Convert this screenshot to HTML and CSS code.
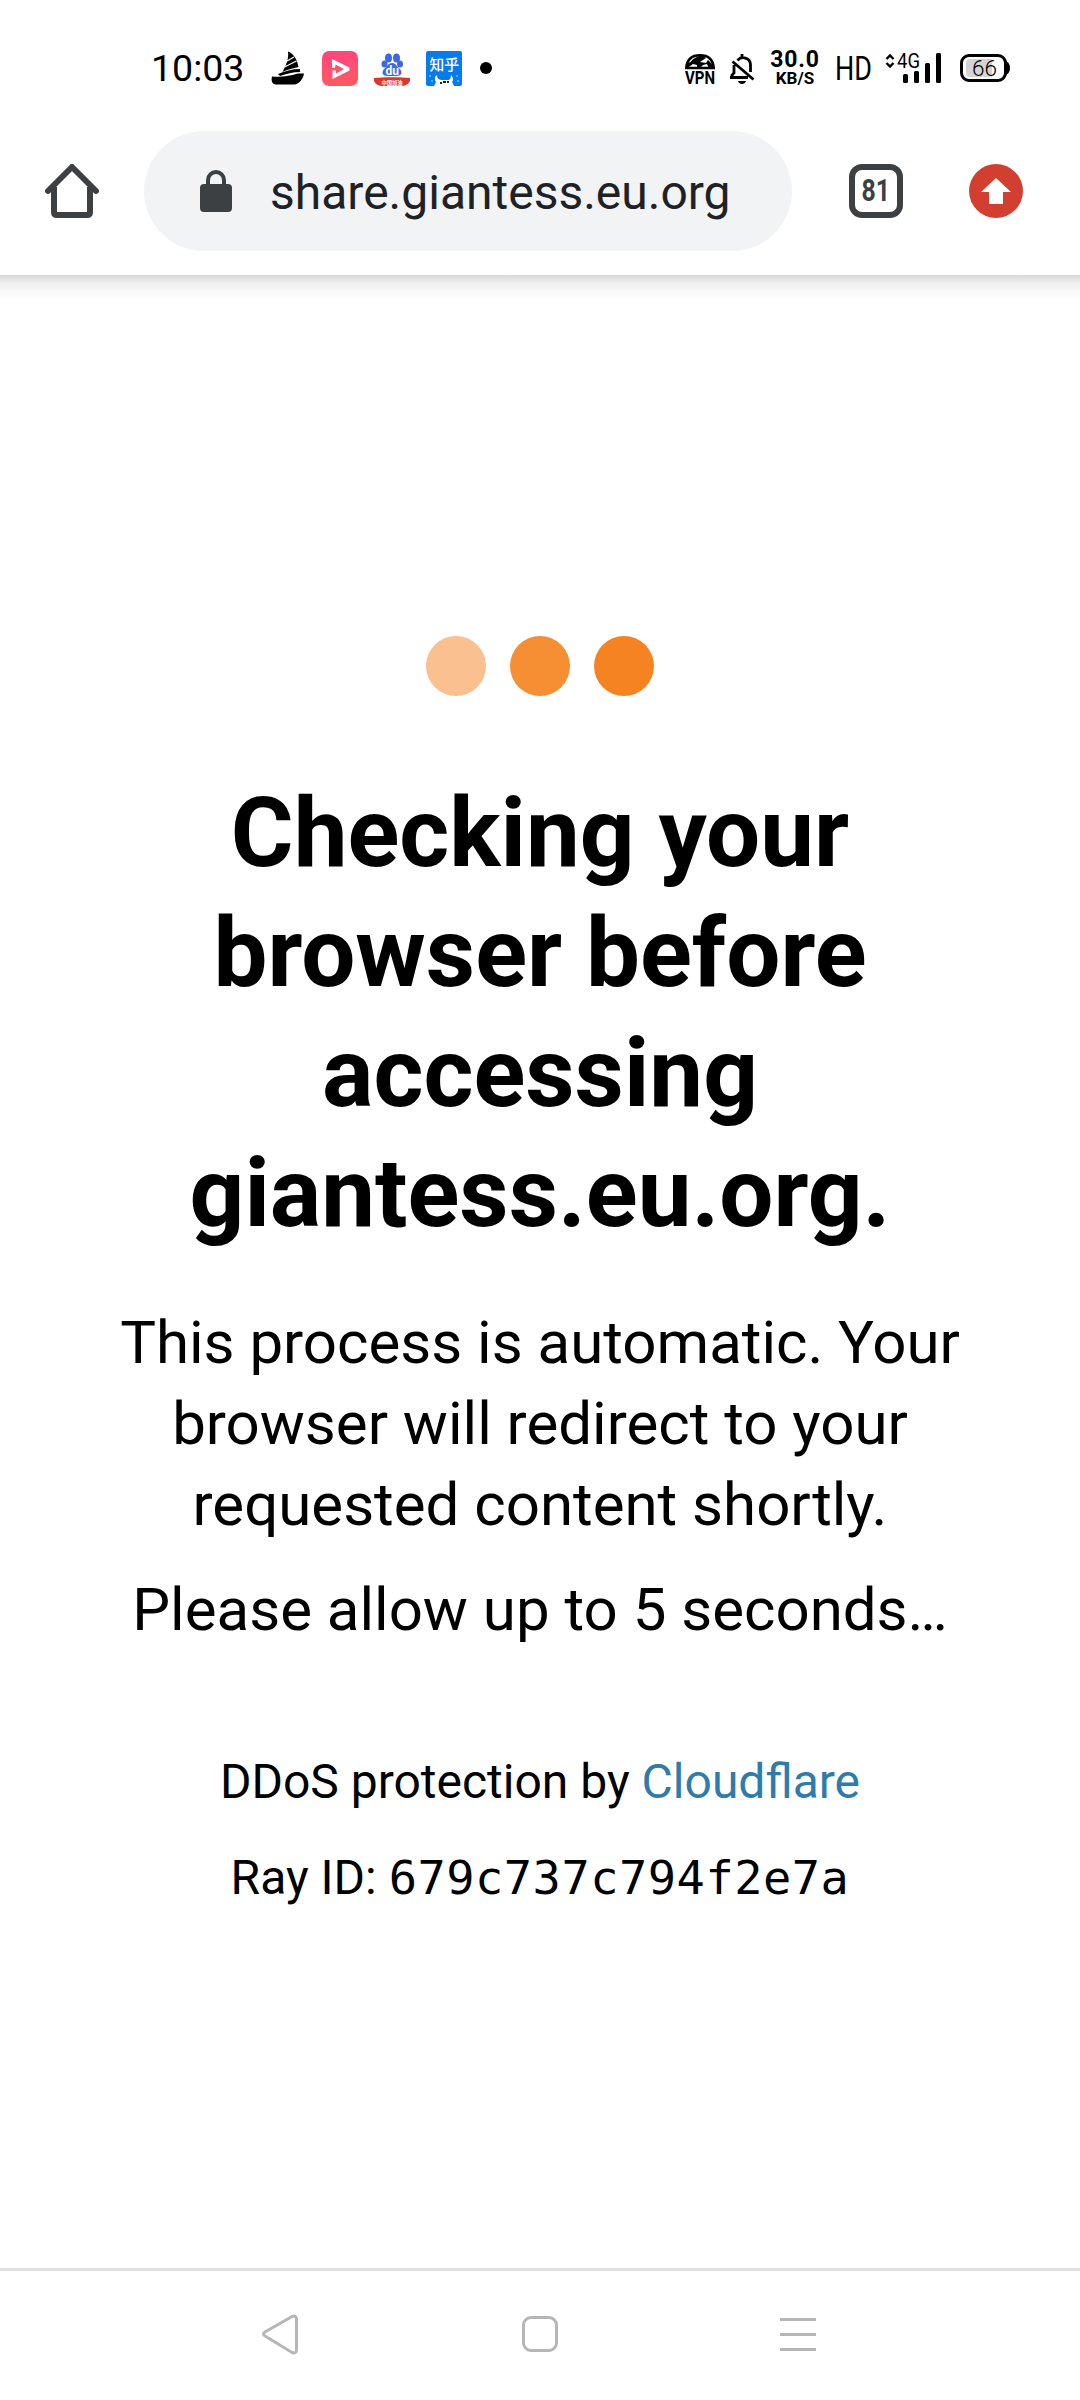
FILE: index.html
```html
<!DOCTYPE html>
<html lang="en">
<head>
<meta charset="utf-8">
<title>Checking your browser</title>
<link rel="stylesheet" href="styles.css">
</head>
<body>
<header class="status">
  <span class="clock">10:03</span>
  <div class="notifications">
    <svg width="36" height="36" viewBox="0 0 36 36"><path d="M18 1.500C24 4 27 9 28.500 17c-5 1-12 3-16 5C16 15 19 9 18 1.500z"/><path d="M8 24c7-3 14-5 22-5v3c-7 0-14 2-20 4z"/><path d="M17 11l7-4M14.500 17l12-6" stroke="#fff" stroke-width="1.200"/><path d="M2 26.500c8 1 20-1 26-3h6c-1 6-5 10-9 11H6c-4 0-5-4-4-8z"/></svg>
    <svg width="36" height="36" viewBox="0 0 36 36"><defs><linearGradient id="pink" x2="0" y2="1"><stop stop-color="#ff467c"/><stop offset="1" stop-color="#ff5a62"/></linearGradient></defs><rect y="1" width="36" height="35" rx="7" fill="url(#pink)"/><path d="M10 9L27.500 17.500v3L10.500 29v-8.500h3.500v3l8-4.500-8.500-4.500-.5 3.500h-3z" fill="#fff"/></svg>
    <svg width="36" height="36" viewBox="0 0 36 36"><g fill="#3b6ade"><ellipse cx="14.500" cy="8" rx="3.500" ry="4.500"/><ellipse cx="22.500" cy="8" rx="3.500" ry="4.500"/><ellipse cx="10.500" cy="14" rx="3" ry="3.500"/><ellipse cx="26" cy="14" rx="3" ry="3.500"/><path d="M18 13c4 0 5 4 8 6 3 4 1 7-3 7H13c-4 0-6-3-3-7 3-2 4-6 8-6z"/></g><text class="du" x="18.300" y="24.500">du</text><path d="M0 28c8-1 28-1 36 0v3c-2 4-6 5-9 5H9c-4 0-8-2-9-5z" fill="#df3430"/><text class="ribbon" x="7.500" y="34.500" textLength="21" lengthAdjust="spacingAndGlyphs">中国加油</text></svg>
    <svg width="36" height="36" viewBox="0 0 36 36"><rect y="1" width="36" height="35" rx="2" fill="#087bec"/><text class="zhihu" x="3.500" y="19.500" textLength="29.500" lengthAdjust="spacingAndGlyphs">知乎</text><path d="M8 36l2-4c-2-3-1-6 1-7 0 3 1 4 4 5h7c2 0 3-2 3-5 2 2 3 5 1 7l2 4z" fill="#fff"/><path d="M14 32h2v2h-2zM21 31h2v2h-2zM17 31h3v2h-3z" fill="#222"/><path d="M4 25v2M6 30v2M31 25v2M32 30v2" stroke="#73bcff" stroke-width="1.500"/></svg>
    <svg width="12" height="36" viewBox="0 0 12 36"><circle cx="6" cy="18" r="6"/></svg>
  </div>
  <div class="signals">
    <svg width="30" height="36" viewBox="0 0 30 36"><path d="M1.300 18C2 9 7 5.300 15 5.300S28 9 28.700 18z" fill="none" stroke="#000" stroke-width="2.600"/><path d="M1 19l2-6c3 0 4-4 7-5l6-3 5 3-6 4 6 1 2-3 5 5 1 4h-5l-2-5-4 1-3 3h-3v-3l-4-1z"/><text class="vpn" y="34" textLength="30" lengthAdjust="spacingAndGlyphs">VPN</text></svg>
    <svg class="bell" width="26" height="36" viewBox="0 0 26 36"><path d="M3.500 11.500l21 18M1 27.500h18M3 28v-3l2-2v-8M8.500 10.500c4-5 13-3 13 4.500v7M13 4v4" fill="none" stroke="#000" stroke-width="2.800"/><path d="M9 31h8c-1 4-7 4-8 0z"/></svg>
    <div class="speed"><span class="rate">30.0</span><span class="unit">KB/S</span></div>
    <svg class="hd" width="36" height="36" viewBox="0 0 36 36"><text class="hd-text" y="30" textLength="37" lengthAdjust="spacingAndGlyphs">HD</text></svg>
    <svg class="cell" width="57" height="36" viewBox="0 0 57 36"><path d="M1.500 9L5 5.500 8.500 9M1.500 13L5 16.500 8.500 13" fill="none" stroke="#000" stroke-width="2.400"/><text class="net" x="12" y="17.500" textLength="23" lengthAdjust="spacingAndGlyphs">4G</text><g><rect x="18" y="24" width="5" height="9" rx="1.500"/><rect x="29" y="21" width="5" height="12" rx="1.500"/><rect x="40" y="13" width="5" height="20" rx="1.500"/><rect x="51" y="3" width="5" height="30" rx="1.500"/></g></svg>
    <svg class="battery" width="50" height="36" viewBox="0 0 50 36"><path d="M10 9h22v18H10q-4 0-4-4V13q0-4 4-4z" fill="#d4d4d4"/><rect x="1.500" y="5.500" width="44" height="25" rx="7.500" fill="none" stroke="#000" stroke-width="3"/><path d="M46 11q4 2 4 7t-4 7z"/><text class="charge" x="12" y="26" textLength="25" lengthAdjust="spacingAndGlyphs">66</text></svg>
  </div>
</header>
<nav class="toolbar">
  <svg width="54" height="54" viewBox="0 0 54 54" fill="none" stroke="#3c4043" stroke-width="6" stroke-linejoin="round"><path d="M3 27L27 3l24 24" stroke-linecap="round"/><path d="M9 23v25q0 3 3 3h30q3 0 3-3V23" /></svg>
  <div class="omnibox">
    <svg width="32" height="42" viewBox="0 0 32 42"><rect y="14" width="32" height="28" rx="4" fill="#3c4043"/><path d="M8 15V10a8 8 0 0 1 16 0v5" fill="none" stroke="#3c4043" stroke-width="4"/></svg>
    <span class="url">share.giantess.eu.org</span>
  </div>
  <div class="tabs"><span class="count">81</span></div>
  <svg width="54" height="54" viewBox="0 0 54 54"><circle cx="27" cy="27" r="27" fill="#d23f31"/><path d="M27 14l15 14h-8v12H20V28h-8z" fill="#fff"/></svg>
</nav>
<main class="page">
  <div class="dots"><i class="dot faint"></i><i class="dot mid"></i><i class="dot"></i></div>
  <h1 class="title">Checking your browser before accessing giantess.eu.org.</h1>
  <p class="message">This process is automatic. Your browser will redirect to your requested content shortly.</p>
  <p class="message">Please allow up to 5 seconds…</p>
  <div class="attribution">
    <p>DDoS protection by <a class="link">Cloudflare</a></p>
    <p>Ray ID: <code class="ray">679c737c794f2e7a</code></p>
  </div>
</main>
<footer class="navbar">
  <svg width="38" height="42" viewBox="0 0 38 42"><path d="M31 3.500L4 19q-3 2 0 4l27 16.500q4 1.500 4.500-2V6q-.5-4-4.500-2.500z"/></svg>
  <svg width="36" height="36" viewBox="0 0 36 36"><rect x="1.500" y="1.500" width="33" height="33" rx="7.500"/></svg>
  <svg width="36" height="33" viewBox="0 0 36 33"><path d="M0 1.500h36M0 16.500h36M0 31.500h36"/></svg>
</footer>
</body>
</html>
```

FILE: styles.css
```css
* { box-sizing: border-box; }
body {
  margin: 0;
  width: 1080px;
  height: 2400px;
  display: flex;
  flex-direction: column;
  background: #fff;
  color: #000;
  font-family: Roboto, sans-serif;
}
svg { display: block; flex: none; }
p, h1 { margin: 0; }

/* Status bar */
.status {
  height: 110px;
  padding: 50px 70px 24px 151px;
  display: flex;
  align-items: center;
}
.clock { font-size: 37.5px; line-height: 36px; width: 119px; white-space: nowrap; }
.notifications { display: flex; gap: 16px; }
.notifications svg:last-child { margin-left: 2px; }
.signals { display: flex; margin-left: auto; }
.du { font: 700 12px Roboto, sans-serif; fill: #fff; text-anchor: middle; }
.ribbon { font: 700 6px "Noto Sans CJK SC", sans-serif; fill: #fff; }
.zhihu { font: 500 14.5px "Noto Sans CJK SC", sans-serif; fill: #fff; }
.vpn { font: 700 18.5px Roboto, sans-serif; }
.bell { margin-left: 14px; }
.speed {
  width: 52px;
  margin-left: 14px;
  display: flex;
  flex-direction: column;
  align-items: center;
  font-weight: 700;
}
.rate { font-size: 23px; line-height: 20px; letter-spacing: 0.8px; }
.unit { font-size: 17px; line-height: 17px; }
.hd { margin-left: 14px; overflow: visible; }
.hd-text { font: 400 34px Roboto, sans-serif; }
.cell { margin-left: 14px; }
.net { font: 400 21px Roboto, sans-serif; }
.battery { margin-left: 18px; }
.charge { font: 300 22.5px Roboto, sans-serif; }

/* Browser toolbar */
.toolbar {
  height: 165px;
  padding: 21px 57px 24px 45px;
  display: flex;
  align-items: center;
}
.omnibox {
  width: 648px;
  height: 120px;
  margin-left: 45px;
  padding-left: 56px;
  display: flex;
  align-items: center;
  gap: 38px;
  border-radius: 60px;
  background: #f1f3f5;
}
.url { font-size: 48px; line-height: 56px; padding-top: 4px; color: #202124; }
.tabs {
  width: 54px;
  height: 54px;
  margin: 0 66px 0 57px;
  display: flex;
  align-items: center;
  justify-content: center;
  border: 6px solid #3c4043;
  border-radius: 13px;
}
.count { font-size: 31px; font-weight: 700; line-height: 36px; color: #3c4043; transform: scaleX(0.8); }

/* Interstitial */
.page {
  flex: 1;
  padding: 361px 90px 0;
  text-align: center;
  background: linear-gradient(#d8d8d8, #ececec 7px, #f8f8f8 15px, #fff 24px) no-repeat;
}
.dots { display: flex; justify-content: center; gap: 24px; }
.dot { width: 60px; height: 60px; border-radius: 50%; background: #f58322; }
.faint { background: #fbc08f; }
.mid { background: #f68e33; }
.title { margin: 77px 0 49px; font-size: 96px; font-weight: 700; line-height: 120px; }
.message { margin-bottom: 24px; font-size: 60px; line-height: 81px; }
.attribution {
  margin-top: 99px;
  display: flex;
  flex-direction: column;
  gap: 31px;
  font-size: 48px;
  line-height: 65px;
}
.attribution p { height: 65px; }
.link { color: #2f7bab; }
.ray { font: 47px/1 "DejaVu Sans Mono", monospace; letter-spacing: 0.5px; }

/* System navigation */
.navbar {
  height: 132px;
  padding: 0 264px 3px 261px;
  display: flex;
  align-items: center;
  justify-content: space-between;
  border-top: 3px solid #e0e0e0;
  fill: none;
  stroke: #b6b6b6;
  stroke-width: 3px;
}
```
